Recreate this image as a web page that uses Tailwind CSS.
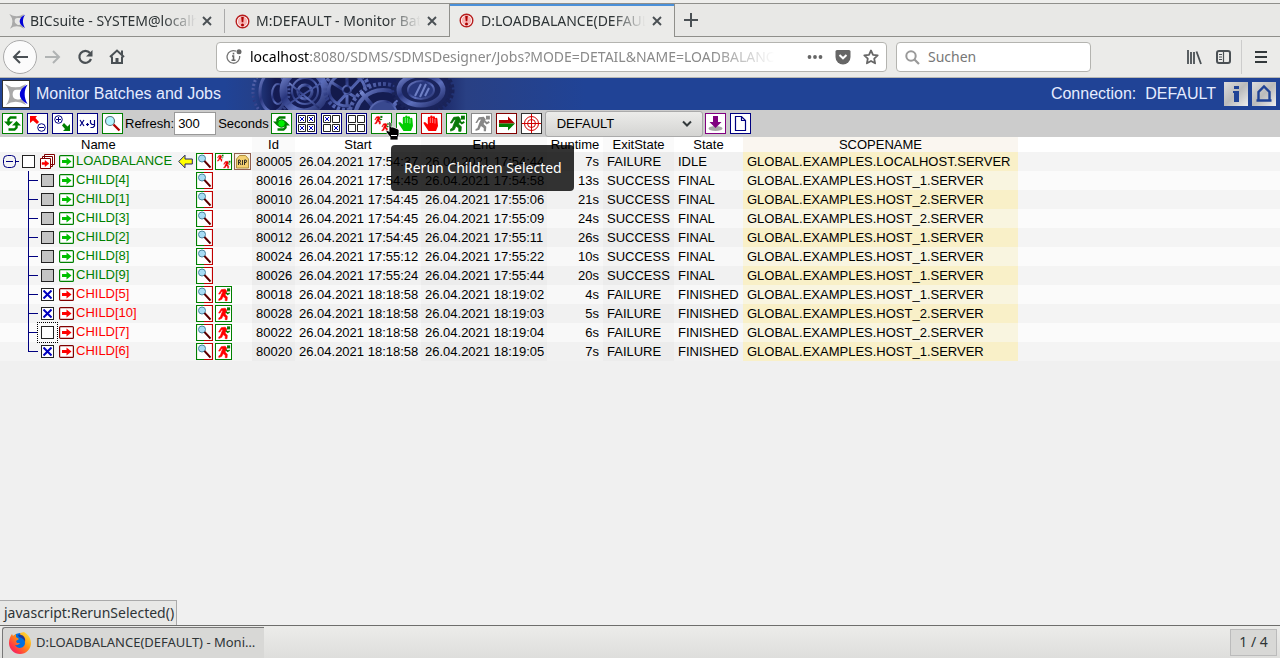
<!DOCTYPE html>
<html lang="en">
<head>
<meta charset="utf-8">
<title>D:LOADBALANCE(DEFAULT) - Monitor Batches and Jobs</title>
<script src="https://cdn.jsdelivr.net/npm/@tailwindcss/browser@4"></script>
</head>
<body class="bg-[#f0f0f0] text-black">
<svg class="hidden" aria-hidden="true">
  <symbol id="swirl" viewBox="0 0 27 27">
    <path d="M2 3q11 7 22 0-2 2-4 6-4 0-6 0-4 0-4 5 0 4 4 5 3 1 6-1 2 4 4 7-11-7-21 0 8-11-1-22z" fill="#a9a9a9"/>
    <path d="M25.500 4c-4 6-4 13 0 20-5-3-8-6-8-10s3-8 8-10z" fill="#0000d8"/>
  </symbol>
  <symbol id="alert" viewBox="0 0 15 15"><circle cx="7.500" cy="7.500" r="6.300" fill="#fff" stroke="#b71c1c" stroke-width="1.400"/><circle cx="7.500" cy="7.500" r="4.800" fill="#f7b5b5"/><path d="M6.200 2.800h2.600l-.5 5.500H6.700z" fill="#b00000"/><circle cx="7.500" cy="10.900" r="1.500" fill="#b00000"/></symbol>
  <symbol id="close" viewBox="0 0 10 10"><path d="M1 1l8 8M9 1L1 9" stroke="#4a5054" stroke-width="1.900"/></symbol>
  <symbol id="mag" viewBox="0 0 17 17">
    <rect width="17" height="17" fill="#fff"/><path d="M8 .5H.5v16H8" fill="none" stroke="#008000" stroke-width="1.200"/><path d="M8 .5h8.500v16H8" fill="none" stroke="#c00000" stroke-width="1.200"/>
    <circle cx="6" cy="5.500" r="3.500" fill="#a8dcf4" stroke="#4c86a0" stroke-width="1"/><path d="M8.500 8l6 6.500" stroke="#700000" stroke-width="1.900"/><path d="M8 8l6 6.500" stroke="#200000" stroke-width=".6"/>
  </symbol>
  <symbol id="man" viewBox="0 0 17 17">
    <path d="M12.500 1.500h3.500v3.500h-3.500z" fill="#087808"/><path d="M6 3l4.500-.5 1.800 2.500-2 4 2.500 2.500-.3 4h-2V12.500L8 10.800l-1.500 3.200-3.300 1.300v-1.800l1.600-.8 1.700-4.700L8 5 6.200 5.300 4.500 8H3z" fill="currentColor" stroke="currentColor" stroke-width=".7"/><path d="M11.300 6.500l1.900 1.800 2.300-1.300" fill="none" stroke="#087808" stroke-width="1.700"/>
  </symbol>
  <symbol id="arrowbox" viewBox="0 0 15 15"><rect x=".6" y="1.600" width="13.800" height="11.800" rx="1" fill="#fff" stroke="currentColor" stroke-width="1.200"/></symbol>
  <symbol id="cycle" viewBox="0 0 19 19">
    <path d="M13.500 3.500H7.500L5.500 5.500V8" fill="none" stroke="#008000" stroke-width="2.400"/><path d="M1 7.500h9L5.500 12z" fill="#008000"/>
    <path d="M5.500 15.500h6l2-2V11" fill="none" stroke="#008000" stroke-width="2.400"/><path d="M18 11.500H9L13.500 7z" fill="#008000"/>
  </symbol>
  <symbol id="hand" viewBox="0 0 19 19"><path d="M6.500 17l-4-6-1.200-2.300L3 8l2.800 2.500V4q0-1.200 1.200-1.200T8.200 4V2.700q0-1.200 1.200-1.200t1.200 1.200v.8q0-1.200 1.200-1.200T13 3.500V5q0-1.200 1.200-1.200T15.400 5L16 12l-2 5z" fill="currentColor"/><path d="M8.300 4v5M10.600 4v5M13 5v4.500" stroke="#fff" stroke-width=".5"/></symbol>
</svg>

<div class="flex min-h-screen flex-col">
  <!-- Browser chrome -->
  <div class="bg-[#e8e8e6] font-['Noto_Sans',sans-serif] text-sm text-[#2e3436]">
    <div class="h-1 border-b border-[#8f8f8b] bg-[#eeeeec]"></div>
    <div class="flex h-[33px] items-stretch">
      <div class="flex w-[225px] items-center border-b border-[#8f8f8b] pt-[2px]">
        <a href="#" class="ml-2 flex min-w-0 flex-1 items-center gap-1"><svg class="size-[18px] shrink-0"><use href="#swirl"/></svg><span class="w-[170px] overflow-hidden whitespace-nowrap [mask-image:linear-gradient(to_right,black_78%,transparent_98%)]">BICsuite - SYSTEM@localhost</span></a>
        <button aria-label="Close tab" class="mr-3 grid size-[10px] place-items-center"><svg class="size-[10px]"><use href="#close"/></svg></button>
        <span class="h-6 w-px bg-[#aaa]"></span>
      </div>
      <div class="flex w-[225px] items-center border-r border-b border-[#8f8f8b] pt-[2px]">
        <a href="#" class="ml-[10px] flex min-w-0 flex-1 items-center gap-[6px]"><svg class="size-[15px] shrink-0"><use href="#alert"/></svg><span class="w-[168px] overflow-hidden whitespace-nowrap [mask-image:linear-gradient(to_right,black_78%,transparent_98%)]">M:DEFAULT - Monitor Batches</span></a>
        <button aria-label="Close tab" class="mr-3 grid size-[10px] place-items-center"><svg class="size-[10px]"><use href="#close"/></svg></button>
      </div>
      <div class="flex w-[225px] items-center border-r border-[#8f8f8b] bg-[#ebebe9] shadow-[inset_0_2px_0_#4a90d9]">
        <a href="#" class="ml-[9px] flex min-w-0 flex-1 items-center gap-[7px]"><svg class="size-[15px] shrink-0"><use href="#alert"/></svg><span class="w-[168px] overflow-hidden whitespace-nowrap [mask-image:linear-gradient(to_right,black_78%,transparent_98%)]">D:LOADBALANCE(DEFAULT)</span></a>
        <button aria-label="Close tab" class="mr-3 grid size-[10px] place-items-center"><svg class="size-[10px]"><use href="#close"/></svg></button>
      </div>
      <div class="flex flex-1 items-center border-b border-[#8f8f8b] pl-[9px]">
        <button aria-label="New tab"><svg class="size-[14px]" viewBox="0 0 14 14"><path d="M7 0v14M0 7h14" stroke="#4a5054" stroke-width="2"/></svg></button>
      </div>
    </div>
    <div class="flex h-[41px] items-center border-b border-[#b8b8b4] bg-[#ebebe9]">
      <button aria-label="Back" class="ml-[3px] grid size-[34px] place-items-center rounded-full border border-[#aaa] bg-[#fbfbfb]"><svg class="size-4" viewBox="0 0 16 16"><path d="M8 2L2 8l6 6M2 8h14" fill="none" stroke="#4a5054" stroke-width="2"/></svg></button>
      <button aria-label="Forward" class="ml-2"><svg class="size-4" viewBox="0 0 16 16"><path d="M8 2l6 6-6 6M14 8H0" fill="none" stroke="#b0b3b3" stroke-width="2"/></svg></button>
      <button aria-label="Reload" class="ml-4"><svg class="size-4" viewBox="0 0 16 16"><path d="M13 4a6 6 0 1 0 1 6" fill="none" stroke="#4a5054" stroke-width="2.200"/><path d="M15.500 1v6.500H9z" fill="#4a5054"/></svg></button>
      <button aria-label="Home" class="ml-4"><svg class="size-4" viewBox="0 0 16 16"><path d="M1 8l7-6.500L15 8M3 7.500V14h10V7.500" fill="none" stroke="#4a5054" stroke-width="2"/><path d="M6.500 9h3v5h-3zM12 1.500h2V6h-2z" fill="#4a5054"/></svg></button>
      <div class="ml-[91px] flex h-[30px] min-w-0 max-w-[671px] flex-1 items-center rounded-[4px] border border-[#b4b4b0] bg-white">
        <svg class="ml-[9px] size-4 shrink-0" viewBox="0 0 16 16"><path d="M10 2.200A6.300 6.300 0 1 0 13.600 7" fill="none" stroke="#737373" stroke-width="1.300"/><circle cx="13" cy="2.700" r="2.500" fill="#666"/><path d="M6 7h1.500v4M5.500 11.200h4M7.500 3.800v1.700" fill="none" stroke="#666" stroke-width="1.600"/></svg>
        <div class="ml-2 min-w-0 flex-1 overflow-hidden text-sm whitespace-nowrap text-[#8a8a8a] [mask-image:linear-gradient(to_right,black_88%,transparent)]"><span class="text-black">localhost</span>:8080/SDMS/SDMSDesigner/Jobs?MODE=DETAIL&amp;NAME=LOADBALANCE</div>
        <button aria-label="Page actions" class="ml-8"><svg class="size-4" viewBox="0 0 16 16" fill="#666"><circle cx="2.500" cy="8" r="1.900"/><circle cx="8" cy="8" r="1.900"/><circle cx="13.500" cy="8" r="1.900"/></svg></button>
        <button aria-label="Save to Pocket" class="ml-3"><svg class="size-4" viewBox="0 0 16 16"><path d="M2 1h12q1.500 0 1.500 1.500V8a7.500 7.500 0 0 1-15 0V2.500Q.5 1 2 1z" fill="#666"/><path d="M4.500 6L8 9.300 11.500 6" fill="none" stroke="#fff" stroke-width="2"/></svg></button>
        <button aria-label="Bookmark" class="mr-[7px] ml-3"><svg class="size-4" viewBox="0 0 16 16"><path d="M8 1.500l2 4.300 4.700.6-3.500 3.200.9 4.700L8 12l-4.100 2.300.9-4.700L1.300 6.400 6 5.800z" fill="none" stroke="#666" stroke-width="1.800" stroke-linejoin="round"/></svg></button>
      </div>
      <div class="ml-[9px] flex h-[30px] w-[195px] items-center gap-2 rounded-[4px] border border-[#b4b4b0] bg-white pl-2">
        <svg class="size-[15px]" viewBox="0 0 15 15"><circle cx="6" cy="6" r="4.700" fill="none" stroke="#999" stroke-width="2"/><path d="M9.500 9.500L14 14" stroke="#999" stroke-width="2.200"/></svg>
        <input aria-label="Suchen" placeholder="Suchen" class="w-32 bg-transparent text-sm outline-none placeholder:text-[#777]">
      </div>
      <div class="ml-auto flex items-center">
        <button aria-label="Library"><svg class="size-4" viewBox="0 0 16 16"><path d="M1 1v14M4 3v12M7 3v12M9.500 2.500L14 15" fill="none" stroke="#4a5054" stroke-width="1.800"/></svg></button>
        <button aria-label="Sidebars" class="ml-3"><svg class="size-4" viewBox="0 0 16 16"><rect x="2" y="2" width="13" height="12" rx="2" fill="none" stroke="#4a5054" stroke-width="2"/><path d="M8.500 2v12M4 5.500h3M4 8h3M4 10.500h3" stroke="#4a5054" stroke-width="1.200"/></svg></button>
        <span class="ml-[10px] h-[34px] w-px bg-[#ccc]"></span>
        <button aria-label="Menu" class="mr-3 ml-3"><svg class="size-[14px]" viewBox="0 0 14 14"><path d="M1 2h12M1 7h12M1 12h12" stroke="#33393b" stroke-width="2"/></svg></button>
      </div>
    </div>
  </div>

  <!-- Application -->
  <main class="flex-1 font-['Liberation_Sans',sans-serif] text-[13px]">
    <header class="relative flex h-8 items-center bg-[#204396] text-base text-[#e6ecff]">
      <svg class="absolute top-0 left-[225px] h-8 w-[360px]" viewBox="0 0 360 32" aria-hidden="true">
        <defs>
          <linearGradient id="fade"><stop offset="0" stop-color="#204396"/><stop offset=".08" stop-color="#24408a"/><stop offset=".14" stop-color="#141b52"/><stop offset=".58" stop-color="#182260"/><stop offset=".67" stop-color="#294084"/><stop offset="1" stop-color="#204396"/></linearGradient>
          <linearGradient id="steel" x2="1" y2="1"><stop offset="0" stop-color="#7c8dd4"/><stop offset=".35" stop-color="#28357c"/><stop offset=".6" stop-color="#5c6ebb"/><stop offset="1" stop-color="#1c2662"/></linearGradient>
        </defs>
        <rect width="360" height="32" fill="url(#fade)"/>
        <g fill="none" stroke="url(#steel)">
          <ellipse cx="46" cy="14" rx="18" ry="24" stroke-width="3" stroke-dasharray="2 2"/><ellipse cx="48" cy="14" rx="13" ry="20" stroke-width="3"/><ellipse cx="53" cy="16" rx="6" ry="10" stroke-width="2"/>
          <circle cx="79" cy="13" r="21" stroke-width="7"/><circle cx="80" cy="13" r="13" stroke-width="2"/><circle cx="80" cy="14" r="7" fill="#131a4c" stroke-width="3"/><path d="M62 27l34-22M64 5l30 25" stroke-width="2"/>
          <ellipse cx="122" cy="12" rx="22" ry="20" stroke-width="4" stroke-dasharray="3 2"/><ellipse cx="122" cy="12" rx="18" ry="16" fill="#131a4c" stroke-width="3"/><path d="M106 4l32 20M112 26l24-26M122-4v32" stroke-width="3"/><circle cx="122" cy="12" r="4" fill="#121a4c" stroke-width="2"/>
          <circle cx="158" cy="40" r="34" fill="#161f58" stroke-width="4" stroke-dasharray="3 2"/><circle cx="158" cy="40" r="28" fill="#141c50" stroke-width="4"/><path d="M156 38l-20-24M160 38l20-24" stroke-width="4"/><circle cx="158" cy="37" r="14" fill="#39498f" stroke-width="2"/>
          <ellipse cx="198" cy="12" rx="29" ry="22" fill="#1a245c" stroke="#1a2358" stroke-width="5" stroke-dasharray="3 2"/><ellipse cx="196" cy="12" rx="22" ry="15" stroke-width="5"/><ellipse cx="196" cy="12" rx="13" ry="9" fill="#28377c" stroke-width="2"/><path d="M190 18l6-12M195 19l6-13M200 18l4-8" stroke="#6f80c6" stroke-width="2"/>
        </g>
      </svg>
      <div class="relative flex w-full items-center">
        <span class="ml-[2px] grid size-7 place-items-center border border-[#333] bg-white"><svg class="size-[26px]"><use href="#swirl"/></svg></span>
        <h1 class="ml-[6px]">Monitor Batches and Jobs</h1>
        <span class="ml-auto whitespace-pre">Connection:  DEFAULT</span>
        <button aria-label="Information" class="ml-2 grid size-6 place-items-center bg-linear-to-br from-[#ddd] via-[#bbb] to-[#eee]"><svg class="size-6" viewBox="0 0 24 24"><path d="M10 4h5v3h-5zM9 9h6v11h-5v-9H9z" fill="#204396"/></svg></button>
        <button aria-label="Home" class="mr-1 ml-1 grid size-6 place-items-center bg-linear-to-br from-[#ddd] via-[#bbb] to-[#eee]"><svg class="size-6" viewBox="0 0 24 24"><path d="M6.500 18.500V10L12 4.500l5.500 5.500v8.500zM4.500 18.500h15" fill="none" stroke="#204396" stroke-width="2.400"/></svg></button>
      </div>
    </header>

    <div class="relative flex h-[27px] items-center bg-[#ccc]">
      <div class="ml-[2px] flex gap-1">
        <button aria-label="Refresh" class="size-[21px] border border-[#008000] bg-white"><svg class="size-[19px]"><use href="#cycle"/></svg></button>
        <button aria-label="Collapse" class="size-[21px] border border-[#000080] bg-white"><svg class="size-[19px]" viewBox="0 0 19 19"><path d="M2 2h7L7.500 4l3.500 4-2 2-4-3.500L2 9z" fill="red"/><circle cx="13.500" cy="13.500" r="3.800" fill="none" stroke="#000080"/><path d="M11 13.500h5" stroke="#000080"/></svg></button>
        <button aria-label="Expand" class="size-[21px] border border-[#000080] bg-white"><svg class="size-[19px]" viewBox="0 0 19 19"><path d="M17 17h-7l2-2-3-3.500L11 9l3.500 3.500L17 10z" fill="#008000"/><circle cx="5.500" cy="5.500" r="3.800" fill="none" stroke="#000080"/><path d="M3 5.500h5M5.500 3v5" stroke="#000080"/></svg></button>
        <button aria-label="Position" class="size-[21px] border border-[#000080] bg-white"><svg class="size-[19px]" viewBox="0 0 19 19"><path d="M2 6l4 6M6 6l-4 6M12.500 6v3l1.500 1.500h3M16.500 6v6l-1.500 1.500h-2.500M8 10.500h3M9.500 9v3" fill="none" stroke="#000080" stroke-width="1.200"/></svg></button>
        <button aria-label="Search" class="size-[21px] border border-[#008000] bg-white"><svg class="size-[19px]" viewBox="0 0 19 19"><circle cx="7" cy="7" r="4.500" fill="#b4f4ff" stroke="#58777c" stroke-width="1.200"/><path d="M10.500 10.500l6 6" stroke="#b00000" stroke-width="2.300"/></svg></button>
      </div>
      <label for="refresh" class="ml-[2px]">Refresh:</label>
      <input id="refresh" value="300" class="h-[23px] w-[42px] border border-[#999] bg-white px-[3px] outline-none">
      <span class="ml-[2px]">Seconds</span>
      <div class="ml-[2px] flex gap-1">
        <button aria-label="Auto refresh" class="size-[21px] border border-[#008000] bg-white"><svg class="size-[19px]" viewBox="0 0 19 19"><use href="#cycle"/><circle cx="9.500" cy="9.500" r="3.800" fill="#00f000" stroke="#008000"/></svg></button>
        <button aria-label="Select all" class="size-[21px] border border-[#000080] bg-white"><svg class="size-[19px]" viewBox="0 0 19 19" fill="none"><path d="M1.500 1.500h7v7h-7zM10.500 1.500h7v7h-7zM1.500 10.500h7v7h-7zM10.500 10.500h7v7h-7z" stroke="#222"/><path d="M3 3l4 4M7 3L3 7M12 3l4 4M16 3l-4 4M3 12l4 4M7 12l-4 4M12 12l4 4M16 12l-4 4" stroke="#0000c0"/></svg></button>
        <button aria-label="Invert selection" class="size-[21px] border border-[#000080] bg-white"><svg class="size-[19px]" viewBox="0 0 19 19" fill="none"><path d="M1.500 1.500h7v7h-7zM10.500 1.500h7v7h-7zM1.500 10.500h7v7h-7zM10.500 10.500h7v7h-7z" stroke="#222"/><path d="M3 3l4 4M7 3L3 7M12 12l4 4M16 12l-4 4" stroke="#0000c0"/></svg></button>
        <button aria-label="Select none" class="size-[21px] border border-[#000080] bg-white"><svg class="size-[19px]" viewBox="0 0 19 19" fill="none"><path d="M1.500 1.500h7v7h-7zM10.500 1.500h7v7h-7zM1.500 10.500h7v7h-7zM10.500 10.500h7v7h-7z" stroke="#222"/></svg></button>
        <button aria-label="Rerun Children Selected" class="relative size-[21px] border border-[#008000] bg-white"><svg class="size-[19px] text-[#f00000]" viewBox="0 0 19 19"><use href="#man" x="1" y="1" width="10" height="10"/><use href="#man" x="8" y="8" width="10" height="10"/></svg>
          <svg class="absolute top-[7px] left-[13px] z-20 h-5 w-[15px]" viewBox="0 0 15 20"><path d="M3 1h2l1 1v4h2l5 2 1 1v5l-1 2v3H5v-3l-4-5v-1l2-.5 1 1V2z" fill="#000" stroke="#fff" stroke-width=".8"/><path d="M6 14.500h6" stroke="#fff"/></svg>
        </button>
        <button aria-label="Enable" class="size-[21px] border border-[#008000] bg-white text-[#00cc00]"><svg class="size-[19px]"><use href="#hand"/></svg></button>
        <button aria-label="Suspend" class="size-[21px] border border-[#c00000] bg-white text-[red]"><svg class="size-[19px]"><use href="#hand"/></svg></button>
        <button aria-label="Run" class="size-[21px] border border-[#008000] bg-white text-[#087808]"><svg class="size-[19px]"><use href="#man"/></svg></button>
        <button aria-label="Run disabled" class="size-[21px] border border-[#888] bg-white"><svg class="size-[19px] text-[#808080]" viewBox="0 0 17 17"><path d="M12.500 1.500h3.500v3.500h-3.500zM6 3l4.500-.5 1.800 2.500-2 4 2.500 2.500-.3 4h-2V12.500L8 10.800l-1.500 3.200-3.300 1.300v-1.800l1.600-.8 1.700-4.700L8 5 6.200 5.300 4.500 8H3z" fill="#888"/><path d="M11.300 6.500l1.900 1.800 2.300-1.300" fill="none" stroke="#888" stroke-width="1.700"/></svg></button>
        <button aria-label="Continue" class="size-[21px] border border-[#800000] bg-white"><svg class="size-[19px]" viewBox="0 0 19 19"><path d="M2 6h9V2.500l7 7H2z" fill="#b00000"/><path d="M2 9.500h16l-7 7V13H2z" fill="#008000"/></svg></button>
        <button aria-label="Target" class="size-[21px] border border-[#333] bg-white"><svg class="size-[19px]" viewBox="0 0 19 19" fill="none" stroke="#d00000"><circle cx="9.500" cy="9.500" r="7"/><circle cx="9.500" cy="9.500" r="4"/><path d="M9.500 0v19M0 9.500h19"/></svg></button>
      </div>
      <div class="relative ml-[3px]">
        <select aria-label="View" class="h-[26px] w-[158px] appearance-none rounded-[3px] border border-[#aaa] bg-linear-to-b from-[#ececea] to-[#d4d4d2] pl-[11px]"><option>DEFAULT</option></select>
        <svg class="pointer-events-none absolute top-[9px] right-[11px] h-2 w-[10px]" viewBox="0 0 10 8"><path d="M1 1.500l4 4 4-4" fill="none" stroke="#33393b" stroke-width="2"/></svg>
      </div>
      <div class="ml-[2px] flex gap-1">
        <button aria-label="Save" class="size-[21px] border border-[#800080] bg-white"><svg class="size-[19px]" viewBox="0 0 19 19"><ellipse cx="9.500" cy="14.500" rx="7" ry="2.500" fill="#a8a8a8"/><path d="M7 2h5v6h3.500l-6 6-6-6H7z" fill="#800080"/></svg></button>
        <button aria-label="New" class="size-[21px] border border-[#000080] bg-white"><svg class="size-[19px]" viewBox="0 0 19 19"><path d="M4.500 2.500h6l4 4v10h-10zM10.500 2.500v4h4" fill="none" stroke="#000080" stroke-width="1.200"/></svg></button>
      </div>
      <div role="tooltip" class="absolute top-[35px] left-[391px] z-10 flex h-[46px] items-center rounded-[4px] bg-black/80 pr-3 pl-[13px] font-['Noto_Sans',sans-serif] text-sm text-white">Rerun Children Selected</div>
    </div>

    <table class="w-full table-fixed border-collapse whitespace-nowrap">
      <colgroup><col class="w-[252px]"><col class="w-[43px]"><col class="w-[126px]"><col class="w-[126px]"><col class="w-14"><col class="w-[71px]"><col class="w-[69px]"><col class="w-[275px]"><col></colgroup>
      <thead>
        <tr class="h-[15px] bg-white leading-[15px]">
          <th class="p-0 pl-[81px] text-left font-normal">Name</th><th class="bg-[#fafafa] p-0 font-normal">Id</th><th class="p-0 font-normal">Start</th><th class="bg-[#fafafa] p-0 font-normal">End</th><th class="p-0 font-normal">Runtime</th><th class="bg-[#fafafa] p-0 font-normal">ExitState</th><th class="p-0 font-normal">State</th><th class="bg-[#faf6f0] p-0 font-normal">SCOPENAME</th><th class="p-0"></th>
        </tr>
      </thead>
      <tbody id="jobs"></tbody>
    </table>
  </main>

  <div class="h-[25px] self-start border-t border-r border-[#aaa] bg-[#e8e8e6] pr-[2px] pl-1 font-['Noto_Sans',sans-serif] text-sm leading-6 text-[#2e3436]">javascript:RerunSelected()</div>
  <footer class="flex h-[33px] items-center justify-between border-t border-[#6e6e6c] bg-linear-to-b from-[#ececea] to-[#dededc] font-['Noto_Sans',sans-serif] text-[13px] text-[#2e3436]">
    <button class="ml-[2px] flex h-[31px] w-[262px] items-center gap-1 self-end rounded-tl-[3px] border-t border-l border-[#777] bg-[#d8d8d6] pl-[5px]">
      <svg class="size-6 shrink-0" viewBox="0 0 24 24"><defs><linearGradient id="fox" x1="1" y1="0" x2="0" y2="1"><stop offset="0" stop-color="#fff44f"/><stop offset=".4" stop-color="#ff980e"/><stop offset=".75" stop-color="#ff3647"/><stop offset="1" stop-color="#e31587"/></linearGradient></defs><circle cx="12" cy="11" r="9" fill="#0070e0"/><path d="M12 2l4-1c5 3 7 7 7 11a11 11 0 0 1-22 0c0-4 1-6 3-9l1 2 3-2v3l3 2-3 2 1 2h3c-2 3-5 2-5 2 3 5 10 3 10-2 0-4-2-5-4-6z" fill="url(#fox)"/><path d="M10 4c5-1 8 3 7 7-1-3-3-4-6-5z" fill="#23348f"/></svg>
      <span class="truncate">D:LOADBALANCE(DEFAULT) - Moni…</span>
    </button>
    <span class="mr-[3px] grid h-[27px] w-[47px] place-items-center border border-[#bbb] bg-[#d8d8d6] text-sm">1 / 4</span>
  </footer>
</div>

<script>
// name, id, start, end, runtime, exit state, state, scope, box state
const jobs = [
  ['LOADBALANCE', '80005', '26.04.2021 17:54:37', '26.04.2021 17:54:44', '7s', 'FAILURE', 'IDLE', 'LOCALHOST', 'root'],
  ['CHILD[4]', '80016', '26.04.2021 17:54:45', '26.04.2021 17:54:58', '13s', 'SUCCESS', 'FINAL', 'HOST_1', 'off'],
  ['CHILD[1]', '80010', '26.04.2021 17:54:45', '26.04.2021 17:55:06', '21s', 'SUCCESS', 'FINAL', 'HOST_2', 'off'],
  ['CHILD[3]', '80014', '26.04.2021 17:54:45', '26.04.2021 17:55:09', '24s', 'SUCCESS', 'FINAL', 'HOST_2', 'off'],
  ['CHILD[2]', '80012', '26.04.2021 17:54:45', '26.04.2021 17:55:11', '26s', 'SUCCESS', 'FINAL', 'HOST_1', 'off'],
  ['CHILD[8]', '80024', '26.04.2021 17:55:12', '26.04.2021 17:55:22', '10s', 'SUCCESS', 'FINAL', 'HOST_1', 'off'],
  ['CHILD[9]', '80026', '26.04.2021 17:55:24', '26.04.2021 17:55:44', '20s', 'SUCCESS', 'FINAL', 'HOST_1', 'off'],
  ['CHILD[5]', '80018', '26.04.2021 18:18:58', '26.04.2021 18:19:02', '4s', 'FAILURE', 'FINISHED', 'HOST_1', 'on'],
  ['CHILD[10]', '80028', '26.04.2021 18:18:58', '26.04.2021 18:19:03', '5s', 'FAILURE', 'FINISHED', 'HOST_2', 'on'],
  ['CHILD[7]', '80022', '26.04.2021 18:18:58', '26.04.2021 18:19:04', '6s', 'FAILURE', 'FINISHED', 'HOST_2', 'focus'],
  ['CHILD[6]', '80020', '26.04.2021 18:18:58', '26.04.2021 18:19:05', '7s', 'FAILURE', 'FINISHED', 'HOST_1', 'on'],
];
const arrow = red => `<svg class="size-[15px] shrink-0 ${red ? 'text-[#800000]' : 'text-[#008000]'}" viewBox="0 0 15 15"><use href="#arrowbox"/><path d="M3 6h4.500V3.500l5 4-5 4V9H3z" fill="${red ? '#ff0000' : '#00c000'}"/></svg>`;
const box = (s, name) => `<span class="grid size-[13px] shrink-0 place-items-center ${s === 'focus' ? 'outline-1 outline-offset-[3px] outline-dotted outline-black' : ''}"><input type="checkbox" aria-label="${name}" ${s === 'on' ? 'checked' : ''} ${s === 'off' ? 'disabled' : ''} class="col-start-1 row-start-1 size-[13px] appearance-none border border-[#222] bg-white disabled:bg-[#c4c4c4]">${s === 'on' ? '<svg class="pointer-events-none col-start-1 row-start-1 size-[9px]" viewBox="0 0 9 9"><path d="M.5.5l8 8M8.500.5l-8 8" stroke="#0000c0" stroke-width="2"/></svg>' : ''}</span>`;
const mag = '<button aria-label="Details" class="size-[17px]"><svg class="size-[17px]"><use href="#mag"/></svg></button>';
document.getElementById('jobs').innerHTML = jobs.map((j, i) => {
  const [name, id, start, end, run, exit, state, scope, s] = j;
  const red = s === 'on' || s === 'focus';
  const last = i === jobs.length - 1;
  const tree = s === 'root'
    ? `<svg class="ml-[3px] h-[19px] w-4 shrink-0" viewBox="0 0 16 19"><rect x=".5" y="3.500" width="12" height="12" rx="4" fill="none" stroke="#000080"/><path d="M3 9.500h7M12.500 9.500H16" stroke="#000080"/></svg><span class="ml-[3px] flex">${box(s, name)}</span><svg class="ml-[5px] size-[15px] shrink-0" viewBox="0 0 15 15"><path d="M4.500 4V.5h10v10H11M2.500 5V2.500h10v10H10" fill="#fff" stroke="#800000"/><path d="M.5 4.500h10v10H.5z" fill="#fff" stroke="#800000"/><path d="M2 8.500h3v-2l4 3-4 3v-2H2z" fill="red" stroke="red" stroke-width=".5"/></svg><span class="ml-1 flex">${arrow(false)}</span>`
    : `<svg class="ml-7 h-[19px] w-[10px] shrink-0" viewBox="0 0 10 19"><path d="M.5 0v${last ? '9.500' : '19'}M0 9.500h10" fill="none" stroke="#000080" stroke-width="1"/></svg><span class="ml-[3px] flex">${box(s, name)}</span><span class="ml-[5px] flex">${arrow(red)}</span>`;
  const extra = s === 'root'
    ? `<button aria-label="Rerun children" class="size-[17px] border border-[#008000] bg-white"><svg class="size-[15px] text-[#f00000]" viewBox="0 0 15 15"><use href="#man" width="8" height="8"/><use href="#man" x="6" y="6" width="9" height="9"/></svg></button><button aria-label="Cancel" class="size-[17px] border border-[#906050] bg-[#f8f0e0]"><svg class="size-[15px]" viewBox="0 0 15 15"><path d="M1.500 14V5l3-3.500h6l3 3.500v9z" fill="#f4d070" stroke="#b09040"/><path d="M3.500 11V6H5l.5 1-.5 1.500H3.500M5 9l1 2M7.500 6v5M9.500 11V6H11l.5 1-.5 1.500H9.500" fill="none" stroke="#222" stroke-width=".9"/></svg></button>`
    : red ? '<button aria-label="Rerun" class="size-[17px] border border-[#008000] bg-white"><svg class="size-[15px] text-[red]"><use href="#man"/></svg></button>' : '';
  const pointer = s === 'root' ? '<svg class="mr-[3px] size-[15px]" viewBox="0 0 15 15"><path d="M.7 7.500L7 1.200V5h7.300v5H7v3.800z" fill="#ff0" stroke="#222266"/></svg>' : '';
  return `<tr class="h-[19px] leading-[19px] odd:bg-[#f4f4f4] even:bg-[#fbfbfb]">
    <td class="p-0"><div class="flex h-[19px] items-center">${tree}<a href="#" class="ml-[2px] leading-[17px] ${red ? 'text-[red]' : 'text-[#008000]'} h-[19px]">${name}</a><span class="ml-auto flex items-center">${pointer}<span class="flex w-14 gap-[2px]">${mag}${extra}</span></span></div></td>
    <td class="bg-black/3 p-0 pl-1">${id}</td><td class="bg-black/1 p-0 pl-1">${start}</td><td class="bg-black/3 p-0 pl-1">${end}</td><td class="bg-black/1 p-0 pr-1 text-right">${run}</td><td class="bg-black/3 p-0 pl-1">${exit}</td><td class="bg-black/1 p-0 pl-1">${state}</td><td class="${i % 2 ? 'bg-[#f9f5e0]' : 'bg-[#f9f0c8]'} p-0 pl-1">GLOBAL.EXAMPLES.${scope}.SERVER</td><td class="p-0"></td></tr>`;
}).join('');
</script>
</body>
</html>
